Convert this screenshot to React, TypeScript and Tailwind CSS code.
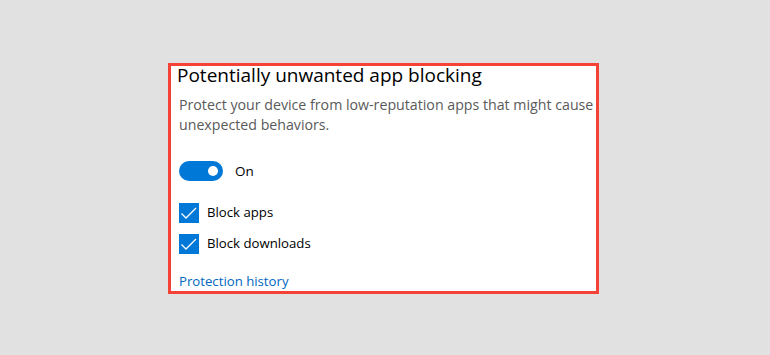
import React from "react";

function Check() {
  return (
    <div className="w-[20px] h-[20px] bg-[#0078d7]">
      <svg width="20" height="20" viewBox="0 0 20 20" fill="none">
        <path d="M2.5 10.5 L7 15 L17 5" stroke="white" strokeWidth="1.3" />
      </svg>
    </div>
  );
}

export default function App() {
  const font = { fontFamily: '"Open Sans", "Noto Sans", sans-serif' };
  return (
    <div className="w-[770px] h-[355px] bg-[#e1e1e1] pt-[63px] pl-[168px]" style={font}>
      <div className="w-[431px] h-[231px] border-[3px] border-[#f44336] bg-white pl-[8px] flex flex-col">
        <div className="-ml-[2px] -mt-[1px] text-[19px] leading-[20px] text-black whitespace-nowrap">
          Potentially unwanted app blocking
        </div>
        <div className="mt-[10px] text-[14.2px] leading-[20px] text-[#5a5a5a] whitespace-nowrap">
          Protect your device from low-reputation apps that might cause
          <br />
          unexpected behaviors.
        </div>
        <div className="mt-[26px] flex items-center gap-[12px] h-[20px]">
          <div className="w-[44px] h-[20px] rounded-full bg-[#0078d7] flex items-center justify-end pr-[5px]">
            <div className="w-[10px] h-[10px] rounded-full bg-white" />
          </div>
          <span className="text-[13.5px] text-black">On</span>
        </div>
        <div className="mt-[22px] flex items-center gap-[8px] h-[20px]">
          <Check />
          <span className="text-[13.2px] text-black">Block apps</span>
        </div>
        <div className="mt-[11px] flex items-center gap-[8px] h-[20px]">
          <Check />
          <span className="text-[13.2px] text-black">Block downloads</span>
        </div>
        <div className="mt-[17px] text-[13.2px] leading-[20px] text-[#0067c0]">Protection history</div>
      </div>
    </div>
  );
}
